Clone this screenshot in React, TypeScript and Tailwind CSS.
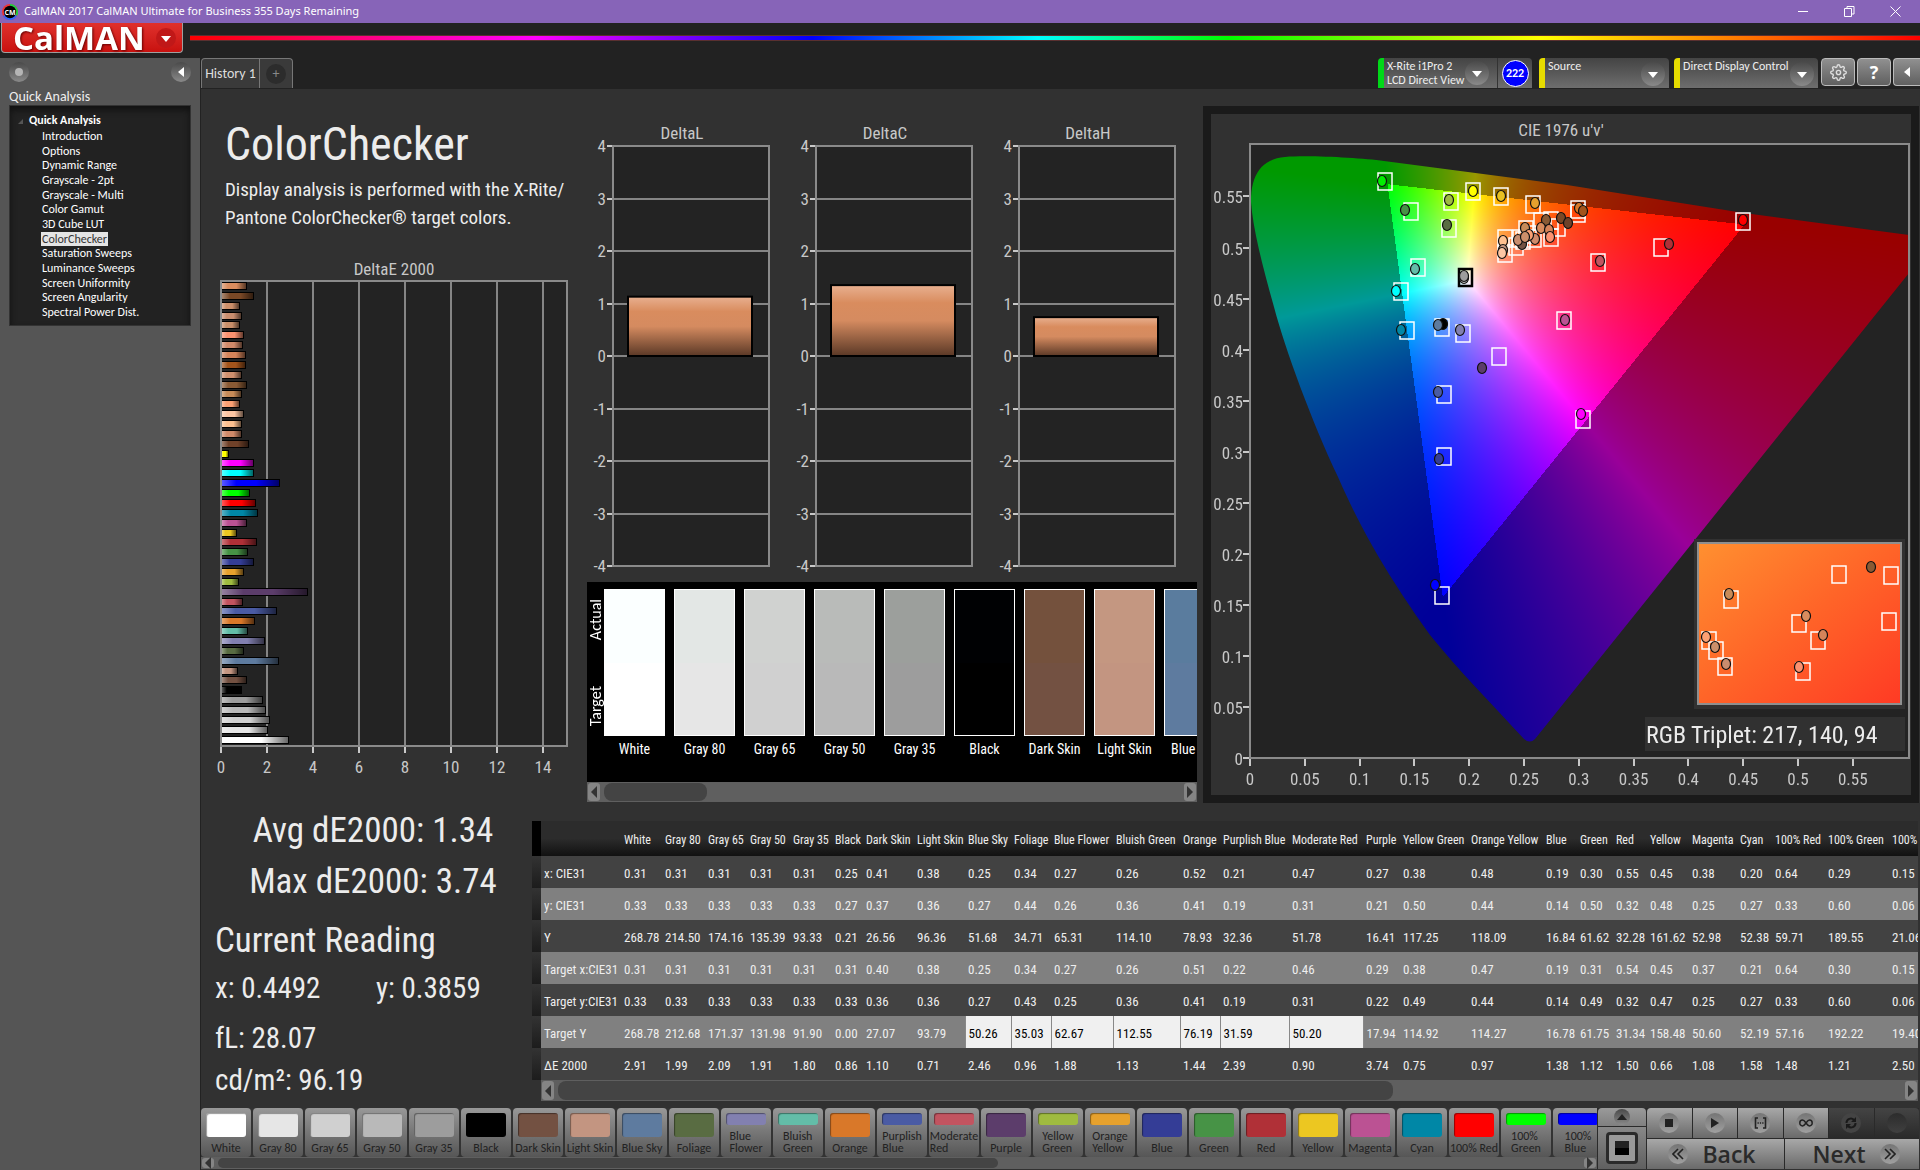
import React, { useLayoutEffect, useRef } from "react";
import { FiSettings } from "react-icons/fi";

type Swatch = {
  name: string;
  color: string;
  actual?: string;
  width: number;
  values: string[];
};

type Mark = { x: number; y: number; color: string };

const rowLabels = ["x: CIE31", "y: CIE31", "Y", "Target x:CIE31", "Target y:CIE31", "Target Y", "ΔE 2000"];

const swatches: Swatch[] = [
  { name: "White", color: "#ffffff", actual: "#fbffff", width: 41, values: ["0.31", "0.33", "268.78", "0.31", "0.33", "268.78", "2.91"] },
  { name: "Gray 80", color: "#e6e6e6", actual: "#e3e7e5", width: 43, values: ["0.31", "0.33", "214.50", "0.31", "0.33", "212.68", "1.99"] },
  { name: "Gray 65", color: "#d0d0d0", actual: "#d0d2d0", width: 42, values: ["0.31", "0.33", "174.16", "0.31", "0.33", "171.37", "2.09"] },
  { name: "Gray 50", color: "#b9b9b9", actual: "#b9bbb9", width: 43, values: ["0.31", "0.33", "135.39", "0.31", "0.33", "131.98", "1.91"] },
  { name: "Gray 35", color: "#9d9d9d", actual: "#9c9f9c", width: 42, values: ["0.31", "0.33", "93.33", "0.31", "0.33", "91.90", "1.80"] },
  { name: "Black", color: "#000000", actual: "#000103", width: 31, values: ["0.25", "0.27", "0.21", "0.31", "0.33", "0.00", "0.86"] },
  { name: "Dark Skin", color: "#735142", actual: "#74513d", width: 51, values: ["0.41", "0.37", "26.56", "0.40", "0.36", "27.07", "1.10"] },
  { name: "Light Skin", color: "#c39581", actual: "#c49781", width: 51, values: ["0.38", "0.36", "96.36", "0.38", "0.36", "93.79", "0.71"] },
  { name: "Blue Sky", color: "#5e7b9f", actual: "#5a7c9e", width: 46, values: ["0.25", "0.27", "51.68", "0.25", "0.27", "50.26", "2.46"] },
  { name: "Foliage", color: "#596c42", width: 40, values: ["0.34", "0.44", "34.71", "0.34", "0.43", "35.03", "0.96"] },
  { name: "Blue Flower", color: "#8280b0", width: 62, values: ["0.27", "0.26", "65.31", "0.27", "0.25", "62.67", "1.88"] },
  { name: "Bluish Green", color: "#63bda8", width: 67, values: ["0.26", "0.36", "114.10", "0.26", "0.36", "112.55", "1.13"] },
  { name: "Orange", color: "#d97829", width: 40, values: ["0.52", "0.41", "78.93", "0.51", "0.41", "76.19", "1.44"] },
  { name: "Purplish Blue", color: "#4a5ba4", width: 69, values: ["0.21", "0.19", "32.36", "0.22", "0.19", "31.59", "2.39"] },
  { name: "Moderate Red", color: "#c25460", width: 74, values: ["0.47", "0.31", "51.78", "0.46", "0.31", "50.20", "0.90"] },
  { name: "Purple", color: "#5c3d6b", width: 37, values: ["0.27", "0.21", "16.41", "0.29", "0.22", "17.94", "3.74"] },
  { name: "Yellow Green", color: "#9fbb40", width: 68, values: ["0.38", "0.50", "117.25", "0.38", "0.49", "114.92", "0.75"] },
  { name: "Orange Yellow", color: "#e6a12d", width: 75, values: ["0.48", "0.44", "118.09", "0.47", "0.44", "114.27", "0.97"] },
  { name: "Blue", color: "#343d96", width: 34, values: ["0.19", "0.14", "16.84", "0.19", "0.14", "16.78", "1.38"] },
  { name: "Green", color: "#479346", width: 36, values: ["0.30", "0.50", "61.62", "0.31", "0.49", "61.75", "1.12"] },
  { name: "Red", color: "#b03037", width: 34, values: ["0.55", "0.32", "32.28", "0.54", "0.32", "31.34", "1.50"] },
  { name: "Yellow", color: "#ecc721", width: 42, values: ["0.45", "0.48", "161.62", "0.45", "0.47", "158.48", "0.66"] },
  { name: "Magenta", color: "#bb5293", width: 48, values: ["0.38", "0.25", "52.98", "0.37", "0.25", "50.60", "1.08"] },
  { name: "Cyan", color: "#0087a6", width: 35, values: ["0.20", "0.27", "52.38", "0.21", "0.27", "52.19", "1.58"] },
  { name: "100% Red", color: "#ff0000", width: 53, values: ["0.64", "0.33", "59.71", "0.64", "0.33", "57.16", "1.48"] },
  { name: "100% Green", color: "#00ff00", width: 64, values: ["0.29", "0.60", "189.55", "0.30", "0.60", "192.22", "1.21"] },
  { name: "100% Blue", color: "#0000ff", width: 60, values: ["0.15", "0.06", "21.06", "0.15", "0.06", "19.40", "2.50"] },
];

const twoLineNames = [
  "Blue Flower",
  "Bluish Green",
  "Purplish Blue",
  "Moderate Red",
  "Yellow Green",
  "Orange Yellow",
  "100% Green",
  "100% Blue",
];

// skin tones and the remaining primaries, top bar first
const extraBars: [string, number][] = [
  ["#d98c5e", 25], ["#7a4826", 32], ["#cc8f6a", 18], ["#c98d6e", 20], ["#c98f6a", 18],
  ["#fb9270", 22], ["#d18a6a", 21], ["#d5845a", 24], ["#a3541c", 24], ["#d0906e", 20],
  ["#8a5a34", 25], ["#c78b58", 20], ["#fba073", 18], ["#fdc6a4", 22], ["#fdc090", 20],
  ["#d08a6a", 20], ["#6f4129", 27], ["#ffff00", 7], ["#ff00ff", 32], ["#00ffff", 32],
];

const swatchBars: [string, number][] = [...swatches]
  .reverse()
  .map((s) => [s.color, Math.round(Number(s.values[6]) * 23)]);

const bars = [...extraBars, ...swatchBars];

const pages = [
  "Introduction",
  "Options",
  "Dynamic Range",
  "Grayscale - 2pt",
  "Grayscale - Multi",
  "Color Gamut",
  "3D Cube LUT",
  "ColorChecker",
  "Saturation Sweeps",
  "Luminance Sweeps",
  "Screen Uniformity",
  "Screen Angularity",
  "Spectral Power Dist.",
];

const targets: [number, number][] = [
  [135, 37], [223, 47], [251, 52], [283, 60], [201, 57], [161, 67], [199, 84], [328, 65], [328, 69],
  [493, 77], [411, 103], [348, 118], [168, 123], [151, 147], [157, 186], [192, 183], [213, 189],
  [249, 212], [314, 176], [194, 250], [194, 312], [333, 275], [192, 451], [255, 94], [255, 109],
  [266, 102], [270, 94], [273, 96], [276, 85], [279, 90], [284, 94], [291, 77], [301, 93], [301, 76],
  [308, 83], [589, 430], [641, 431], [481, 455], [549, 479], [639, 477], [568, 496], [459, 496],
  [466, 506], [475, 522], [553, 527],
];

const readings: Mark[] = [
  { x: 132, y: 37, color: "#00f000" },
  { x: 223, y: 47, color: "#ffff00" },
  { x: 251, y: 52, color: "#e8c020" },
  { x: 285, y: 59, color: "#e6a12d" },
  { x: 199, y: 56, color: "#9fbb40" },
  { x: 155, y: 66, color: "#479346" },
  { x: 197, y: 81, color: "#596c42" },
  { x: 493, y: 76, color: "#ff0000" },
  { x: 419, y: 100, color: "#b03037" },
  { x: 350, y: 117, color: "#c25460" },
  { x: 165, y: 125, color: "#63bda8" },
  { x: 146, y: 147, color: "#00ffff" },
  { x: 151, y: 186, color: "#0087a6" },
  { x: 193, y: 180, color: "#000000" },
  { x: 188, y: 181, color: "#5e7b9f" },
  { x: 210, y: 186, color: "#8280b0" },
  { x: 232, y: 224, color: "#5c3d6b" },
  { x: 315, y: 176, color: "#bb5293" },
  { x: 214, y: 134, color: "#c8c8c8" },
  { x: 214, y: 132, color: "#9d9d9d" },
  { x: 188, y: 248, color: "#4a5ba4" },
  { x: 189, y: 315, color: "#343d96" },
  { x: 331, y: 270, color: "#ff00ff" },
  { x: 185, y: 441, color: "#0000ff" },
  { x: 329, y: 64, color: "#d97829" },
  { x: 333, y: 67, color: "#a3541c" },
  { x: 296, y: 76, color: "#8a5a34" },
  { x: 311, y: 74, color: "#7a4826" },
  { x: 318, y: 79, color: "#6f4129" },
  { x: 291, y: 84, color: "#d98c5e" },
  { x: 299, y: 86, color: "#d5845a" },
  { x: 300, y: 93, color: "#fb9270" },
  { x: 285, y: 95, color: "#d18a6a" },
  { x: 275, y: 84, color: "#c78b58" },
  { x: 272, y: 100, color: "#735142" },
  { x: 279, y: 91, color: "#fba073" },
  { x: 268, y: 96, color: "#c98d6e" },
  { x: 275, y: 93, color: "#cc8f6a" },
  { x: 253, y: 97, color: "#fdc090" },
  { x: 253, y: 106, color: "#c39581" },
  { x: 252, y: 109, color: "#fdc6a4" },
  { x: 621, y: 423, color: "#8a5a34" },
  { x: 479, y: 450, color: "#c78b58" },
  { x: 556, y: 472, color: "#d98c5e" },
  { x: 573, y: 491, color: "#d5845a" },
  { x: 456, y: 493, color: "#fba073" },
  { x: 465, y: 503, color: "#cc8f6a" },
  { x: 476, y: 520, color: "#c98d6e" },
  { x: 549, y: 523, color: "#fb9270" },
];

const PLOT_W = 659;
const PLOT_H = 614;
const LOCUS =
  "M134 17C110 14 60 11 35 13C12 15 1 30 1 58C3 85 12 120 24 163C35 205 62 278 88 333C112 388 140 435 180 491C210 528 240 558 274 595Q280 600 285 595L659 129L659 91L494 69L317 41Z";

function Gamut() {
  const ref = useRef<HTMLCanvasElement>(null);

  useLayoutEffect(() => {
    const ctx = ref.current?.getContext("2d");
    if (!ctx) return;
    const img = ctx.createImageData(PLOT_W, PLOT_H);
    for (let py = 0; py < PLOT_H; py++) {
      for (let px = 0; px < PLOT_W; px++) {
        const u = px / 1096;
        const v = (PLOT_H - py) / 1021;
        const d = 6 * u - 16 * v + 12;
        const x = (9 * u) / d;
        const y = (4 * v) / d;
        const z = 1 - x - y;
        const rgb = [
          3.2406 * x - 1.5372 * y - 0.4986 * z,
          -0.9689 * x + 1.8758 * y + 0.0415 * z,
          0.0557 * x - 0.204 * y + 1.057 * z,
        ];
        const inside = rgb.every((c) => c >= 0);
        const max = Math.max(...rgb);
        const i = (py * PLOT_W + px) * 4;
        rgb.forEach((c, n) => {
          const level = (Math.max(c, 0) / max) * 255;
          img.data[i + n] = inside ? level : level * 0.6;
        });
        img.data[i + 3] = 255;
      }
    }
    ctx.putImageData(img, 0, 0);
    ctx.globalCompositeOperation = "destination-in";
    ctx.fill(new Path2D(LOCUS));
  }, []);

  return <canvas ref={ref} width={PLOT_W} height={PLOT_H} className="block" />;
}

function CieChart() {
  const steps = Array.from({ length: 12 }, (_, i) => i);
  return (
    <svg viewBox="-39 -30 700 681" className="block h-auto w-full font-['Roboto_Condensed',Carlito,sans-serif]">
      <defs>
        <linearGradient id="inset" x1="0" y1="0" x2="1" y2="1">
          <stop offset="0" stopColor="#ff9030" />
          <stop offset="0.5" stopColor="#ff6428" />
          <stop offset="1" stopColor="#ff3a24" />
        </linearGradient>
      </defs>
      <text x="311" y="-8" textAnchor="middle" fontSize="17" fill="#c8c8c8">
        CIE 1976 u'v'
      </text>
      <rect x="0" y="0" width={PLOT_W} height={PLOT_H} fill="#232323" />
      <foreignObject x="0" y="0" width={PLOT_W} height={PLOT_H}>
        <Gamut />
      </foreignObject>
      <rect x="0" y="0" width={PLOT_W} height={PLOT_H} fill="none" stroke="#8a8a8a" strokeWidth="2" />
      {steps.map((i) => (
        <g key={i} fill="#c8c8c8" stroke="none" fontSize="17">
          <rect x={Math.round(i * 54.8) - 1} y="615" width="2" height="7" />
          <rect x="-7" y={Math.round(PLOT_H - i * 51.05) - 1} width="6" height="2" />
          <text x={i * 54.8} y="641" textAnchor="middle">
            {Number((i * 0.05).toFixed(2))}
          </text>
          <text x="-7" y={PLOT_H - i * 51.05 + 7} textAnchor="end">
            {Number((i * 0.05).toFixed(2))}
          </text>
        </g>
      ))}
      <rect x="444" y="395" width="211" height="170" fill="#313131" />
      <rect x="448" y="399" width="203" height="161" fill="url(#inset)" stroke="#8f8f8f" strokeWidth="2" />
      {targets.map(([x, y], i) => (
        <rect key={i} x={x - 7} y={y - 8} width="14" height="17" fill="none" stroke="#fff" strokeWidth="1.5" />
      ))}
      <rect x="209" y="125" width="13" height="17" fill="none" stroke="#000" strokeWidth="2.5" />
      {readings.map((m, i) => (
        <ellipse key={i} cx={m.x} cy={m.y} rx="4.5" ry="5.5" fill={m.color} stroke="#111" strokeWidth="1.2" />
      ))}
      <rect x="395" y="573" width="260" height="34" fill="#313131" />
      <text x="396" y="599" fontSize="24" fill="#ececec">
        RGB Triplet: 217, 140, 94
      </text>
    </svg>
  );
}

function DeltaEChart() {
  return (
    <svg width="386" height="540" className="block font-['Roboto_Condensed',Carlito,sans-serif]">
      <defs>
        <linearGradient id="shine">
          <stop offset="0" stopColor="#fff" stopOpacity="0.35" />
          <stop offset="0.25" stopColor="#fff" stopOpacity="0" />
          <stop offset="0.6" stopColor="#000" stopOpacity="0" />
          <stop offset="1" stopColor="#000" stopOpacity="0.6" />
        </linearGradient>
      </defs>
      <text x="193" y="25" textAnchor="middle" fontSize="17" fill="#c8c8c8">
        DeltaE 2000
      </text>
      <rect x="20" y="31" width="346" height="465" fill="#232323" />
      {[0, 1, 2, 3, 4, 5, 6, 7].map((i) => (
        <g key={i} fill="#c8c8c8">
          <rect x={19 + i * 46} y="31" width="2" height="465" fill="#858585" />
          <rect x={19 + i * 46} y="497" width="2" height="6" />
          <text x={20 + i * 46} y="523" textAnchor="middle" fontSize="17">
            {i * 2}
          </text>
        </g>
      ))}
      <rect x="20" y="31" width="346" height="465" fill="none" stroke="#8a8a8a" strokeWidth="2" />
      {bars.map(([color, w], i) => {
        const y = Math.round(36 + i * 9.86) - 3;
        return (
          <g key={i}>
            <rect x="21" y={y - 1} width={w} height="8" fill="#000" />
            <rect x="21" y={y} width={w - 1} height="6" fill={color} />
            <rect x="21" y={y} width={w - 1} height="6" fill="url(#shine)" />
          </g>
        );
      })}
    </svg>
  );
}

function DeltaChart({ title, value }: { title: string; value: number }) {
  const top = 240 - value * 52.5;
  return (
    <svg width="203" height="466" className="block font-['Roboto_Condensed',Carlito,sans-serif]">
      <defs>
        <linearGradient id="barFill" x1="0" y1="0" x2="0" y2="1">
          <stop offset="0" stopColor="#e8b090" />
          <stop offset="0.25" stopColor="#d98c5e" />
          <stop offset="0.5" stopColor="#d58b60" />
          <stop offset="1" stopColor="#5a3826" />
        </linearGradient>
      </defs>
      <text x="95" y="23" textAnchor="middle" fontSize="17" fill="#c8c8c8">
        {title}
      </text>
      <rect x="26" y="30" width="156" height="420" fill="#232323" />
      {[4, 3, 2, 1, 0, -1, -2, -3, -4].map((n, i) => (
        <g key={n} fill="#c8c8c8">
          <rect x="26" y={Math.round(29 + i * 52.5)} width="156" height="2" fill="#858585" />
          <rect x="20" y={Math.round(29 + i * 52.5)} width="6" height="2" />
          <text x="19" y={36 + i * 52.5} textAnchor="end" fontSize="17">
            {n}
          </text>
        </g>
      ))}
      <rect x="26" y="30" width="156" height="420" fill="none" stroke="#8a8a8a" strokeWidth="2" />
      <rect x="41" y={top} width="124" height={240 - top} fill="url(#barFill)" stroke="#000" strokeWidth="2" />
    </svg>
  );
}

function ScrollButton({ dir, label }: { dir: "left" | "right"; label: string }) {
  return (
    <button aria-label={label} className="flex w-3 shrink-0 items-center justify-center rounded-[3px] bg-[#858585]">
      <svg width="6" height="12" viewBox="0 0 6 12" className="block">
        <path d={dir === "left" ? "M6 0L0 6L6 12Z" : "M0 0L6 6L0 12Z"} fill="#333" />
      </svg>
    </button>
  );
}

function ScrollBar({ name, className, thumb }: { name: string; className: string; thumb: string }) {
  return (
    <div className={`flex gap-1 bg-[#5f5f5f] p-px ${className}`}>
      <ScrollButton dir="left" label={`Scroll ${name} left`} />
      <div className="flex min-w-0 flex-1">
        <div className={`rounded-lg bg-[#444] ${thumb}`} />
      </div>
      <ScrollButton dir="right" label={`Scroll ${name} right`} />
    </div>
  );
}

function Knob({ children, className = "size-6" }: { children?: React.ReactNode; className?: string }) {
  return (
    <span
      className={`flex shrink-0 items-center justify-center rounded-full bg-linear-to-b from-[#4a4a4a] to-[#8a8a8a] ${className}`}
    >
      {children}
    </span>
  );
}

// knob on the light transport buttons
function LightKnob({ children }: { children?: React.ReactNode }) {
  return (
    <span className="flex size-5 shrink-0 items-center justify-center rounded-full bg-linear-to-b from-[#757575] to-[#a0a0a0]">
      {children}
    </span>
  );
}

function Caret({ dir = "down", fill = "#fff" }: { dir?: "down" | "left" | "up"; fill?: string }) {
  const paths = { down: "M0 3H10L5 9Z", left: "M8 0V10L2 5Z", up: "M0 8H10L5 2Z" };
  return (
    <svg width="10" height="10" viewBox="0 0 10 10" className="block">
      <path d={paths[dir]} fill={fill} />
    </svg>
  );
}

function TitleBar() {
  return (
    <div className="flex h-[23px] items-center bg-[#8764b8] pl-[2px] text-white">
      <svg width="16" height="16" viewBox="0 0 16 16" className="mr-[6px]">
        <circle cx="8" cy="8" r="8" fill="#e33" />
        <path d="M8 8L8 0A8 8 0 0 1 15 12Z" fill="#2c4" />
        <path d="M8 8L15 12A8 8 0 0 1 1 12Z" fill="#36f" />
        <circle cx="8" cy="8" r="6.2" fill="#000" />
        <text x="8" y="10.5" textAnchor="middle" fontSize="7" fontWeight="700" fill="#fff" className="font-['Open_Sans',sans-serif]">
          CM
        </text>
      </svg>
      <span className="flex-1 font-['Noto_Sans',sans-serif] text-[11px]">CalMAN 2017 CalMAN Ultimate for Business 355 Days Remaining</span>
      <div className="flex items-center gap-[35px] pr-[19px]">
        <button aria-label="Minimize">
          <svg width="11" height="11" viewBox="0 0 11 11" stroke="#fff" fill="none">
            <path d="M0 5.5H10" />
          </svg>
        </button>
        <button aria-label="Restore">
          <svg width="11" height="11" viewBox="0 0 11 11" stroke="#fff" fill="none">
            <path d="M0.5 2.5H7.5V10.5H0.5ZM3 2V0.5H10V8H8" />
          </svg>
        </button>
        <button aria-label="Close">
          <svg width="11" height="11" viewBox="0 0 11 11" stroke="#fff" fill="none">
            <path d="M0.5 0.5L10.5 10.5M10.5 0.5L0.5 10.5" />
          </svg>
        </button>
      </div>
    </div>
  );
}

function Brand() {
  return (
    <div className="flex h-[35px] items-start">
      <button
        aria-label="CalMAN menu"
        className="ml-px flex h-[30px] w-[182px] items-center justify-between rounded-b-[4px] border border-t-0 border-[#a0a0a0] bg-linear-to-b from-[#e0302c] to-[#c8100e] pr-[6px] pl-[11px]"
      >
        <span className="font-['Open_Sans',sans-serif] text-[33px] leading-[27px] font-bold text-white drop-shadow-[1px_1px_1px_#600]">CalMAN</span>
        <span className="flex size-5 items-center justify-center rounded-full bg-[#c01818]">
          <Caret />
        </span>
      </button>
      <div className="mt-3 ml-[7px] h-[6px] flex-1 border-y border-[#5a3030] bg-[linear-gradient(90deg,#f00_0%,#f0f_20%,#00f_36%,#0ff_49%,#0f0_60%,#ff0_78%,#f00_100%)]" />
    </div>
  );
}

function Sidebar() {
  return (
    <aside className="w-[200px] shrink-0 bg-[#555] text-white">
      <div className="flex items-center justify-between px-[9px] pt-1">
        <Knob className="size-5">
          <span className="size-2 rounded-full bg-[#b5b5b5]" />
        </Knob>
        <button aria-label="Collapse sidebar">
          <Knob className="size-5">
            <Caret dir="left" />
          </Knob>
        </button>
      </div>
      <h2 className="mt-[7px] pl-[9px] text-[14px] leading-4 text-[#eee]">Quick Analysis</h2>
      <nav className="mx-[9px] h-[221px] border border-[#333] bg-[#222] pt-[7px] pl-[19px] text-[12px] leading-[15px] shadow-[inset_0_4px_6px_#111]">
        <div className="relative font-bold">
          <svg width="5" height="5" viewBox="0 0 5 5" className="absolute top-[6px] -left-[11px]">
            <path d="M5 0V5H0Z" fill="#555" />
          </svg>
          Quick Analysis
        </div>
        <ul className="mt-px flex h-[190px] flex-col justify-between pl-3 leading-[14px]">
          {pages.map((p) => (
            <li key={p}>
              <a href="#" className={p === "ColorChecker" ? "inline-block bg-[#e4e4e4] px-px text-[#333]" : "inline-block px-px"}>
                {p}
              </a>
            </li>
          ))}
        </ul>
      </nav>
    </aside>
  );
}

function SourceSelect({ label, className }: { label: string; className: string }) {
  return (
    <div className={`relative flex h-[30px] rounded-t-[4px] border-l-[6px] border-[#e6dc00] bg-linear-to-b from-[#444] to-[#6e6e6e] ${className}`}>
      <select aria-label={label} className="w-full appearance-none bg-transparent pb-[14px] pl-[3px] text-[12px] leading-[14px] text-[#eee]">
        <option>{label}</option>
      </select>
      <span className="pointer-events-none absolute top-1 right-1">
        <Knob className="size-6">
          <Caret />
        </Knob>
      </span>
    </div>
  );
}

function TopBar() {
  const square =
    "flex h-7 w-[34px] items-center justify-center rounded-[4px] border border-[#bbb] bg-linear-to-b from-[#909090] to-[#606060]";
  return (
    <div className="flex h-[31px] items-start justify-between bg-[#222]">
      <div className="flex h-[30px] rounded-t-[4px] border border-b-0 border-[#777] bg-[#3a3a3a] text-[14px] text-[#ddd]">
        <button className="w-[58px] border-r border-[#777]">History 1</button>
        <button aria-label="New history" className="flex w-[32px] items-center justify-center">
          <span className="flex size-5 items-center justify-center rounded-full bg-[#2c2c2c] leading-none text-[#888]">+</span>
        </button>
      </div>
      <div className="flex">
        <div className="flex h-[30px] w-[154px] rounded-t-[4px] border-l-[6px] border-[#00d818] bg-linear-to-b from-[#444] to-[#6e6e6e]">
          <button className="flex w-[114px] items-center justify-between border-r border-[#333] pr-2 pl-[3px] text-left text-[12px] leading-[14px] text-[#eee]">
            <span className="whitespace-nowrap">
              X-Rite i1Pro 2<br />
              LCD Direct View
            </span>
            <Knob className="size-6">
              <Caret />
            </Knob>
          </button>
          <button className="m-auto size-[27px] rounded-full border border-white bg-[#0000ff] text-[12px] font-bold text-white">222</button>
        </div>
        <SourceSelect label="Source" className="ml-[7px] w-[130px]" />
        <SourceSelect label="Direct Display Control" className="ml-[5px] w-[144px]" />
        <div className="ml-[3px] flex gap-[2px]">
          <button aria-label="Settings" className={square}>
            <FiSettings className="size-[17px] text-[#ddd]" />
          </button>
          <button className={`${square} font-['Open_Sans',sans-serif] text-lg font-bold text-white`}>?</button>
          <button
            aria-label="Collapse toolbar"
            className="flex h-7 w-[27px] items-center justify-center rounded-l-[4px] border border-r-0 border-[#bbb] bg-linear-to-b from-[#909090] to-[#606060]"
          >
            <Caret dir="left" />
          </button>
        </div>
      </div>
    </div>
  );
}

function SwatchCompare() {
  return (
    <div className="bg-black">
      <div className="flex h-[200px] overflow-hidden pt-[7px]">
        <div className="flex h-[147px] w-[17px] shrink-0 flex-col items-center justify-between py-[10px] text-[16px] leading-[17px] text-white">
          <span className="rotate-180 [writing-mode:vertical-rl]">Actual</span>
          <span className="rotate-180 [writing-mode:vertical-rl]">Target</span>
        </div>
        <div className="flex gap-[9px]">
          {swatches.slice(0, 9).map((s) => (
            <div key={s.name} className="w-[61px] shrink-0">
              <div className="flex h-[147px] flex-col border border-white">
                <div className="flex-1" style={{ backgroundColor: s.actual }} />
                <div className="flex-1" style={{ backgroundColor: s.color }} />
              </div>
              <div className="mt-1 text-center font-['Roboto_Condensed',Carlito,sans-serif] text-[14px] leading-[18px] whitespace-nowrap text-white">
                {s.name}
              </div>
            </div>
          ))}
        </div>
      </div>
      <ScrollBar name="swatches" className="h-5" thumb="w-[103px]" />
    </div>
  );
}

function ResultsTable() {
  return (
    <div className="mt-[18px] mr-[2px] min-w-0 flex-1 overflow-hidden">
      <table className="w-[1480px] table-fixed border-collapse text-left font-['Roboto_Condensed',Carlito,sans-serif] text-[13px] whitespace-nowrap text-[#eee]">
        <colgroup>
          <col className="w-[9px]" />
          <col className="w-20" />
          {swatches.map((s) => (
            <col key={s.name} style={{ width: s.width }} />
          ))}
          <col />
        </colgroup>
        <thead>
          <tr className="h-[35px] bg-linear-to-b from-[#2c2c2c] from-50% to-[#111] text-[12px]">
            <td className="bg-black p-0" />
            <td className="p-0" />
            {swatches.map((s) => (
              <th key={s.name} className="p-0 pt-[2px] pl-[3px] font-normal">
                {s.name}
              </th>
            ))}
            <td className="p-0" />
          </tr>
        </thead>
        <tbody>
          {rowLabels.map((label, r) => (
            <tr key={label} className={r % 2 ? "h-8 bg-[#808080]" : "h-8 bg-[#424242]"}>
              <td className="bg-linear-to-b from-[#333] to-[#1c1c1c] p-0" />
              <th className="p-0 pt-1 pl-[3px] font-normal">{label}</th>
              {swatches.map((s, c) => (
                <td
                  key={s.name}
                  className={
                    r === 5 && c >= 8 && c <= 14
                      ? "border-x border-[#888] bg-[#f0f0f0] p-0 pt-1 pl-[3px] text-black"
                      : "p-0 pt-1 pl-[3px]"
                  }
                >
                  {s.values[r]}
                </td>
              ))}
              <td className="p-0" />
            </tr>
          ))}
        </tbody>
      </table>
      <ScrollBar name="table" className="ml-[9px] h-[21px]" thumb="w-[835px]" />
    </div>
  );
}

function Metrics() {
  return (
    <div className="w-[331px] shrink-0 pt-[2px] font-['Roboto_Condensed',Carlito,sans-serif] whitespace-nowrap text-[#ececec]">
      <div className="pl-[13px] text-center text-[35px] leading-[51px]">
        <div>Avg dE2000: 1.34</div>
        <div>Max dE2000: 3.74</div>
      </div>
      <div className="mt-[10px] pl-[14px] text-[35px] leading-[48px]">Current Reading</div>
      <div className="flex pl-[14px] text-[29px] leading-[46px]">
        <div className="w-[161px]">x: 0.4492</div>
        <div>y: 0.3859</div>
      </div>
      <div className="mt-[6px] pl-[14px] text-[29px] leading-[42px]">
        <div>fL: 28.07</div>
        <div>cd/m²: 96.19</div>
      </div>
    </div>
  );
}

function SwatchStrip() {
  return (
    <div className="min-w-0 flex-1 overflow-hidden bg-[#5f5f5f]">
      <div className="flex gap-[2px] bg-[#333]">
        {swatches.map((s) => {
          const tall = !twoLineNames.includes(s.name);
          return (
            <button
              key={s.name}
              className="flex h-[49px] w-[50px] shrink-0 flex-col items-center rounded-[4px] bg-linear-to-b from-[#989898] to-[#565656] pt-[5px] text-[12px] leading-3 text-[#222]"
            >
              <span
                className={
                  tall
                    ? "h-6 w-10 rounded-[3px] shadow-[inset_1px_1px_1px_#0006]"
                    : "h-3 w-10 rounded-[3px] shadow-[inset_1px_1px_1px_#0006]"
                }
                style={{ backgroundColor: s.color }}
              />
              <span className={tall ? "mt-[5px] whitespace-nowrap" : "mt-[5px] w-min text-left"}>{s.name}</span>
            </button>
          );
        })}
      </div>
      <ScrollBar name="patches" className="h-3" thumb="w-[780px]" />
    </div>
  );
}

function Transport() {
  const light = "flex h-[30px] flex-1 items-center justify-center bg-linear-to-b from-[#a8a8a8] to-[#6a6a6a]";
  const dark = "flex h-[30px] flex-1 items-center justify-center bg-linear-to-b from-[#444] to-[#2a2a2a]";
  const wide =
    "flex h-[30px] flex-1 items-center justify-between bg-linear-to-b from-[#a8a8a8] to-[#6a6a6a] font-['Open_Sans',sans-serif] text-[23px] font-semibold text-[#2a2a2a]";
  return (
    <div className="mr-px flex shrink-0 gap-px bg-[#2a2a2a] pl-px">
      <div className="flex w-12 flex-col gap-px">
        <button aria-label="Expand panel" className="flex h-[18px] items-center justify-center rounded-t-[4px] bg-linear-to-b from-[#9a9a9a] to-[#808080]">
          <Knob className="size-4">
            <Caret dir="up" fill="#222" />
          </Knob>
        </button>
        <button aria-label="Pattern window" className="flex flex-1 items-center justify-center bg-linear-to-b from-[#888] to-[#606060]">
          <span className="flex size-8 items-center justify-center rounded-[4px] border-[3px] border-[#2a2a2a] bg-[#999]">
            <span className="size-[14px] bg-linear-to-b from-[#222] from-50% to-black to-50%" />
          </span>
        </button>
      </div>
      <div className="flex w-[272px] flex-col gap-px">
        <div className="flex gap-px">
          <button aria-label="Stop" className={`${light} rounded-tl-[4px]`}>
            <LightKnob>
              <span className="size-2 bg-[#222]" />
            </LightKnob>
          </button>
          <button aria-label="Play" className={light}>
            <LightKnob>
              <svg width="9" height="10" viewBox="0 0 9 10">
                <path d="M1 0L9 5L1 10Z" fill="#222" />
              </svg>
            </LightKnob>
          </button>
          <button aria-label="Read series" className={light}>
            <LightKnob>
              <svg width="13" height="12" viewBox="0 0 13 12" fill="none" stroke="#222" strokeWidth="1.6">
                <path d="M4 1H1.5V11H4M9 1H11.5V11H9M3.5 6H4.8M5.9 6H7.1M8.2 6H9.5" />
              </svg>
            </LightKnob>
          </button>
          <button aria-label="Read continuously" className={light}>
            <LightKnob>
              <svg width="14" height="8" viewBox="0 0 14 8" fill="none" stroke="#222" strokeWidth="1.5">
                <path d="M7 4C5.5 2 4.8 1 3.5 1A2.7 3 0 0 0 3.5 7C4.8 7 5.5 6 7 4C8.5 2 9.2 1 10.5 1A2.7 3 0 0 1 10.5 7C9.2 7 8.5 6 7 4Z" />
              </svg>
            </LightKnob>
          </button>
          <button aria-label="Refresh" className={dark}>
            <span className="flex size-5 items-center justify-center rounded-full bg-[#444]">
              <svg width="12" height="12" viewBox="0 0 12 12" fill="none" stroke="#1a1a1a" strokeWidth="2">
                <path d="M1.5 6A4.3 4.3 0 0 1 9 3M10.5 6A4.3 4.3 0 0 1 3 9" />
                <path d="M11 0V5H6ZM1 12V7H6Z" fill="#1a1a1a" stroke="none" />
              </svg>
            </span>
          </button>
          <button aria-label="Idle" className={`${dark} rounded-tr-[4px]`}>
            <span className="size-5 rounded-full bg-linear-to-b from-[#2c2c2c] to-[#404040]" />
          </button>
        </div>
        <div className="flex gap-px">
          <button className={`${wide} pr-7 pl-[21px]`}>
            <LightKnob>
              <Chevrons d="M6 1L1 6L6 11M11 1L6 6L11 11" />
            </LightKnob>
            Back
          </button>
          <button className={`${wide} pr-[19px] pl-7`}>
            Next
            <LightKnob>
              <Chevrons d="M1 1L6 6L1 11M6 1L11 6L6 11" />
            </LightKnob>
          </button>
        </div>
      </div>
    </div>
  );
}

function Chevrons({ d }: { d: string }) {
  return (
    <svg width="12" height="12" viewBox="0 0 12 12" fill="none" stroke="#222" strokeWidth="1.6">
      <path d={d} />
    </svg>
  );
}

export default function App() {
  return (
    <div className="flex min-h-screen flex-col overflow-hidden bg-[#222] font-[Carlito,Lato,sans-serif]">
      <TitleBar />
      <Brand />
      <div className="flex flex-1">
        <Sidebar />
        <main className="ml-px flex min-w-0 flex-1 flex-col bg-[#313131]">
          <TopBar />
          <div className="flex items-start">
            <section className="w-[386px] shrink-0">
              <div className="pt-[29px] pl-6 font-['Roboto_Condensed',Carlito,sans-serif] whitespace-nowrap text-[#ececec]">
                <h1 className="text-[46px] leading-[52px]">ColorChecker</h1>
                <p className="mt-[6px] text-[19px] leading-7">
                  Display analysis is performed with the X-Rite/
                  <br />
                  Pantone ColorChecker® target colors.
                </p>
              </div>
              <div className="mt-[18px]">
                <DeltaEChart />
              </div>
            </section>
            <section className="w-[610px] shrink-0 pt-[27px]">
              <div className="flex">
                <DeltaChart title="DeltaL" value={1.13} />
                <DeltaChart title="DeltaC" value={1.35} />
                <DeltaChart title="DeltaH" value={0.74} />
              </div>
              <SwatchCompare />
            </section>
            <section className="mt-[17px] mr-px ml-[6px] min-w-0 flex-1 border-8 border-[#1a1a1a]">
              <CieChart />
            </section>
          </div>
          <div className="flex items-start">
            <Metrics />
            <ResultsTable />
          </div>
          <footer className="mt-auto flex pb-px">
            <SwatchStrip />
            <Transport />
          </footer>
        </main>
      </div>
    </div>
  );
}
